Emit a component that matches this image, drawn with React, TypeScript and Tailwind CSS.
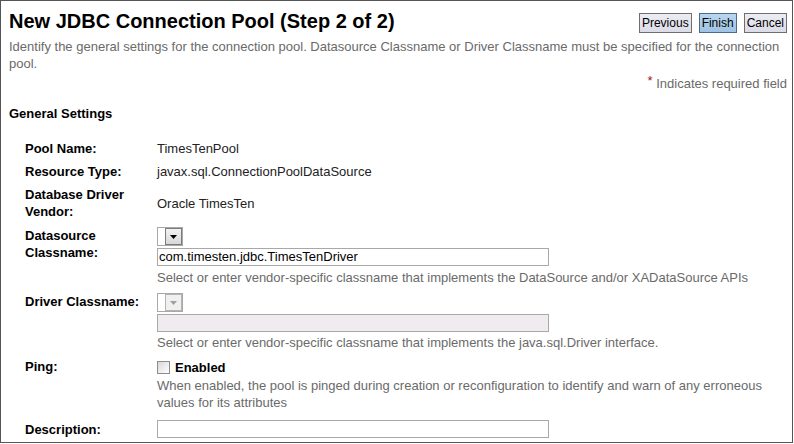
import React from "react";

function Dropdown({ disabled }: { disabled?: boolean }) {
  return (
    <div className="flex h-[19px] w-[26px] border border-[#a8a8a8] bg-white">
      <div className="w-[7px]" />
      <div
        className={
          disabled
            ? "flex flex-1 items-center justify-center border border-[#b4b4b4] bg-[#f0f0f0]"
            : "flex flex-1 items-center justify-center border border-[#7c7c7c] bg-gradient-to-b from-[#f2f2f2] to-[#d8d8d8]"
        }
      >
        <svg width="7" height="4" viewBox="0 0 7 4">
          <path d="M0 0H7L3.5 4Z" fill={disabled ? "#a0a0a0" : "#000"} />
        </svg>
      </div>
    </div>
  );
}

function Label({ children }: { children: React.ReactNode }) {
  return (
    <div className="w-[132px] shrink-0 pr-[4px] text-[13px] font-bold leading-[17px] text-black">
      {children}
    </div>
  );
}

function Help({ children }: { children: React.ReactNode }) {
  return <div className="text-[13px] leading-[17px] text-[#6a6a6a]">{children}</div>;
}

export default function App() {
  return (
    <div className="h-[444px] w-[794px] bg-white font-['Liberation_Sans',Arial,sans-serif]">
      <div className="h-[443px] w-[793px] overflow-hidden border border-[#555555] pl-[8px] pr-[5px]">
        <div className="flex h-[37px] items-start justify-between pt-[8px]">
          <h1 className="text-[20px] font-bold leading-[24px] text-black">
            New JDBC Connection Pool (Step 2 of 2)
          </h1>
          <div className="mt-[4px] flex gap-[7px]">
            <button className="h-[20px] border border-[#6f6f6f] bg-gradient-to-b from-[#ececf4] to-[#dcdce8] px-[2px] text-[12px] leading-[16px] text-black">
              Previous
            </button>
            <button className="h-[20px] border border-[#4d6c89] bg-gradient-to-b from-[#b9d6ef] to-[#9fc3e4] px-[2px] text-[12px] leading-[16px] text-black">
              Finish
            </button>
            <button className="h-[20px] border border-[#6f6f6f] bg-gradient-to-b from-[#ececf4] to-[#dcdce8] px-[2px] text-[12px] leading-[16px] text-black">
              Cancel
            </button>
          </div>
        </div>

        <p className="text-[13px] leading-[17px] text-[#6a6a6a]">
          Identify the general settings for the connection pool. Datasource Classname or Driver Classname must be specified for the connection pool.
        </p>
        <div className="mt-[3px] text-right text-[13px] leading-[17px] text-[#6a6a6a]">
          <span className="relative top-[-3px] text-[#a31515]">*</span> Indicates required field
        </div>

        <div className="mt-[13px] text-[13px] font-bold leading-[17px] text-black">General Settings</div>

        <div className="ml-[16px] mt-[18px] flex flex-col">
          <div className="flex">
            <Label>Pool Name:</Label>
            <div className="text-[13px] leading-[17px] text-[#222]">TimesTenPool</div>
          </div>
          <div className="mt-[6px] flex">
            <Label>Resource Type:</Label>
            <div className="text-[13px] leading-[17px] text-[#222]">javax.sql.ConnectionPoolDataSource</div>
          </div>
          <div className="mt-[6px] flex items-center">
            <Label>Database Driver Vendor:</Label>
            <div className="text-[13px] leading-[17px] text-[#222]">Oracle TimesTen</div>
          </div>
          <div className="mt-[7px] flex">
            <Label>Datasource Classname:</Label>
            <div className="flex flex-1 flex-col">
              <Dropdown />
              <div className="mt-[2px] h-[18px] w-[392px] border border-[#a8a8a8] pl-[1px] text-[13px] leading-[16px] text-black">
                com.timesten.jdbc.TimesTenDriver
              </div>
              <div className="mt-[3px]">
                <Help>Select or enter vendor-specific classname that implements the DataSource and/or XADataSource APIs</Help>
              </div>
            </div>
          </div>
          <div className="mt-[7px] flex">
            <Label>Driver Classname:</Label>
            <div className="flex flex-1 flex-col">
              <Dropdown disabled />
              <div className="mt-[2px] h-[18px] w-[392px] border border-[#a8a8a8] bg-[#efebef]" />
              <div className="mt-[2px]">
                <Help>Select or enter vendor-specific classname that implements the java.sql.Driver interface.</Help>
              </div>
            </div>
          </div>
          <div className="mt-[7px] flex">
            <Label>Ping:</Label>
            <div className="flex flex-1 flex-col">
              <div className="flex h-[19px] items-center">
                <div className="h-[13px] w-[13px] border border-[#8c8c8c] bg-gradient-to-br from-[#d8d8d8] to-[#ffffff]" />
                <span className="ml-[5px] text-[13px] font-bold leading-[19px] text-black">Enabled</span>
              </div>
              <Help>
                When enabled, the pool is pinged during creation or reconfiguration to identify and warn of any erroneous values for its attributes
              </Help>
            </div>
          </div>
          <div className="mt-[9px] flex items-center">
            <Label>Description:</Label>
            <div className="h-[18px] w-[392px] border border-[#a8a8a8]" />
          </div>
        </div>
      </div>
    </div>
  );
}
